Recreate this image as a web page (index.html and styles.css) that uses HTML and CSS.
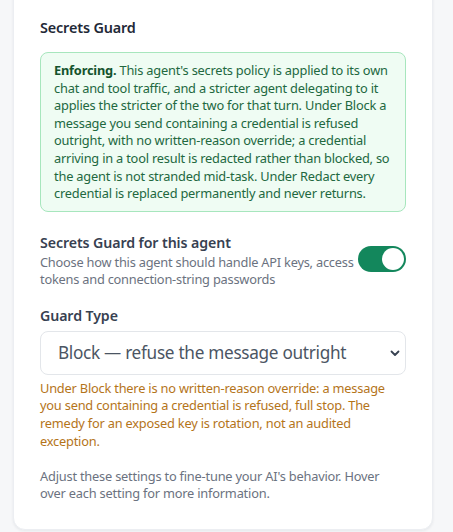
FILE: index.html
```html
<!DOCTYPE html>
<html lang="en">
<head>
<meta charset="utf-8">
<title>Secrets Guard</title>
<link rel="stylesheet" href="styles.css">
</head>
<body>
<div class="page">
  <section class="card">
    <h2 class="card-title">Secrets Guard</h2>
    <div class="notice">
      <strong>Enforcing.</strong> This agent's secrets policy is applied to its own chat and tool traffic, and a stricter agent delegating to it applies the stricter of the two for that turn. Under Block a message you send containing a credential is refused outright, with no written-reason override; a credential arriving in a tool result is redacted rather than blocked, so the agent is not stranded mid-task. Under Redact every credential is replaced permanently and never returns.
    </div>
    <div class="toggle-row">
      <div class="toggle-text">
        <div class="field-label">Secrets Guard for this agent</div>
        <div class="field-desc">Choose how this agent should handle API keys, access tokens and connection-string passwords</div>
      </div>
      <span class="switch" role="switch" aria-checked="true"><span class="knob"></span></span>
    </div>
    <div class="field">
      <label class="field-label" for="guard-type">Guard Type</label>
      <div class="select-wrap">
        <select id="guard-type" class="select">
          <option>Block — refuse the message outright</option>
          <option>Redact — replace credentials</option>
        </select>
        <svg class="chevron" width="10" height="7" viewBox="0 0 10 7" aria-hidden="true"><path d="M1.5 1.5 L5 5 L8.5 1.5" fill="none" stroke="#374151" stroke-width="1.8" stroke-linecap="round" stroke-linejoin="round"/></svg>
      </div>
      <p class="warn">Under Block there is no written-reason override: a message you send containing a credential is refused, full stop. The remedy for an exposed key is rotation, not an audited exception.</p>
    </div>
    <p class="footnote">Adjust these settings to fine-tune your AI's behavior. Hover over each setting for more information.</p>
  </section>
</div>
</body>
</html>
```

FILE: styles.css
```css
* { box-sizing: border-box; }
html, body { margin: 0; padding: 0; }
body {
  background: #f6f7f9;
  font-family: "Noto Sans", "Open Sans", sans-serif;
  color: #374151;
}
.page {
  padding: 0 20px 4px 13px;
}
.card {
  margin-top: -20px;
  background: #ffffff;
  border: 1px solid #eceef2;
  border-radius: 12px;
  box-shadow: 0 1px 3px rgba(15, 23, 42, 0.07);
  padding: 37px 26px 26px 26px;
}
.card-title {
  margin: 0;
  font-size: 14.4px;
  letter-spacing: -0.15px;
  line-height: 20px;
  font-weight: 600;
  color: #1f2937;
}
.notice {
  margin-top: 14px;
  background: #effcf3;
  border: 1px solid #a7e6bd;
  border-radius: 8px;
  padding: 9px 13px 8px 13px;
  font-size: 12.8px;
  letter-spacing: -0.2px;
  line-height: 17.6px;
  color: #22683f;
}
.notice strong {
  color: #14532d;
  font-weight: 700;
}
.toggle-row {
  margin-top: 21px;
  display: flex;
  align-items: flex-start;
  gap: 2px;
}
.toggle-text { flex: 1; }
.field-label {
  display: block;
  font-size: 14.2px;
  letter-spacing: -0.1px;
  line-height: 20px;
  font-weight: 600;
  color: #374151;
}
.field-desc {
  margin-top: 1px;
  font-size: 12.8px;
  letter-spacing: -0.22px;
  line-height: 17px;
  color: #6b7280;
}
.switch {
  flex: none;
  margin-top: 13px;
  width: 48px;
  height: 26px;
  border-radius: 13px;
  background: #13875c;
  display: flex;
  align-items: center;
  justify-content: flex-end;
  padding: 2px;
}
.knob {
  width: 22px;
  height: 22px;
  border-radius: 50%;
  background: #ffffff;
}
.field { margin-top: 18px; }
.select-wrap {
  position: relative;
  margin-top: 5px;
}
.select {
  display: block;
  width: 100%;
  height: 44px;
  appearance: none;
  -webkit-appearance: none;
  background: #ffffff;
  border: 1px solid #e3e6ea;
  border-radius: 8px;
  padding: 0 30px 0 17px;
  font-family: inherit;
  font-size: 17.2px;
  letter-spacing: -0.3px;
  color: #4b5563;
}
.chevron {
  position: absolute;
  right: 6px;
  top: 19px;
}
.warn {
  margin: 5px 0 0 0;
  padding-right: 6px;
  font-size: 12.8px;
  letter-spacing: -0.2px;
  line-height: 17.7px;
  color: #b4741a;
}
.footnote {
  margin: 17px 0 0 0;
  font-size: 12.8px;
  letter-spacing: -0.2px;
  line-height: 17.7px;
  color: #6b7280;
}
```
